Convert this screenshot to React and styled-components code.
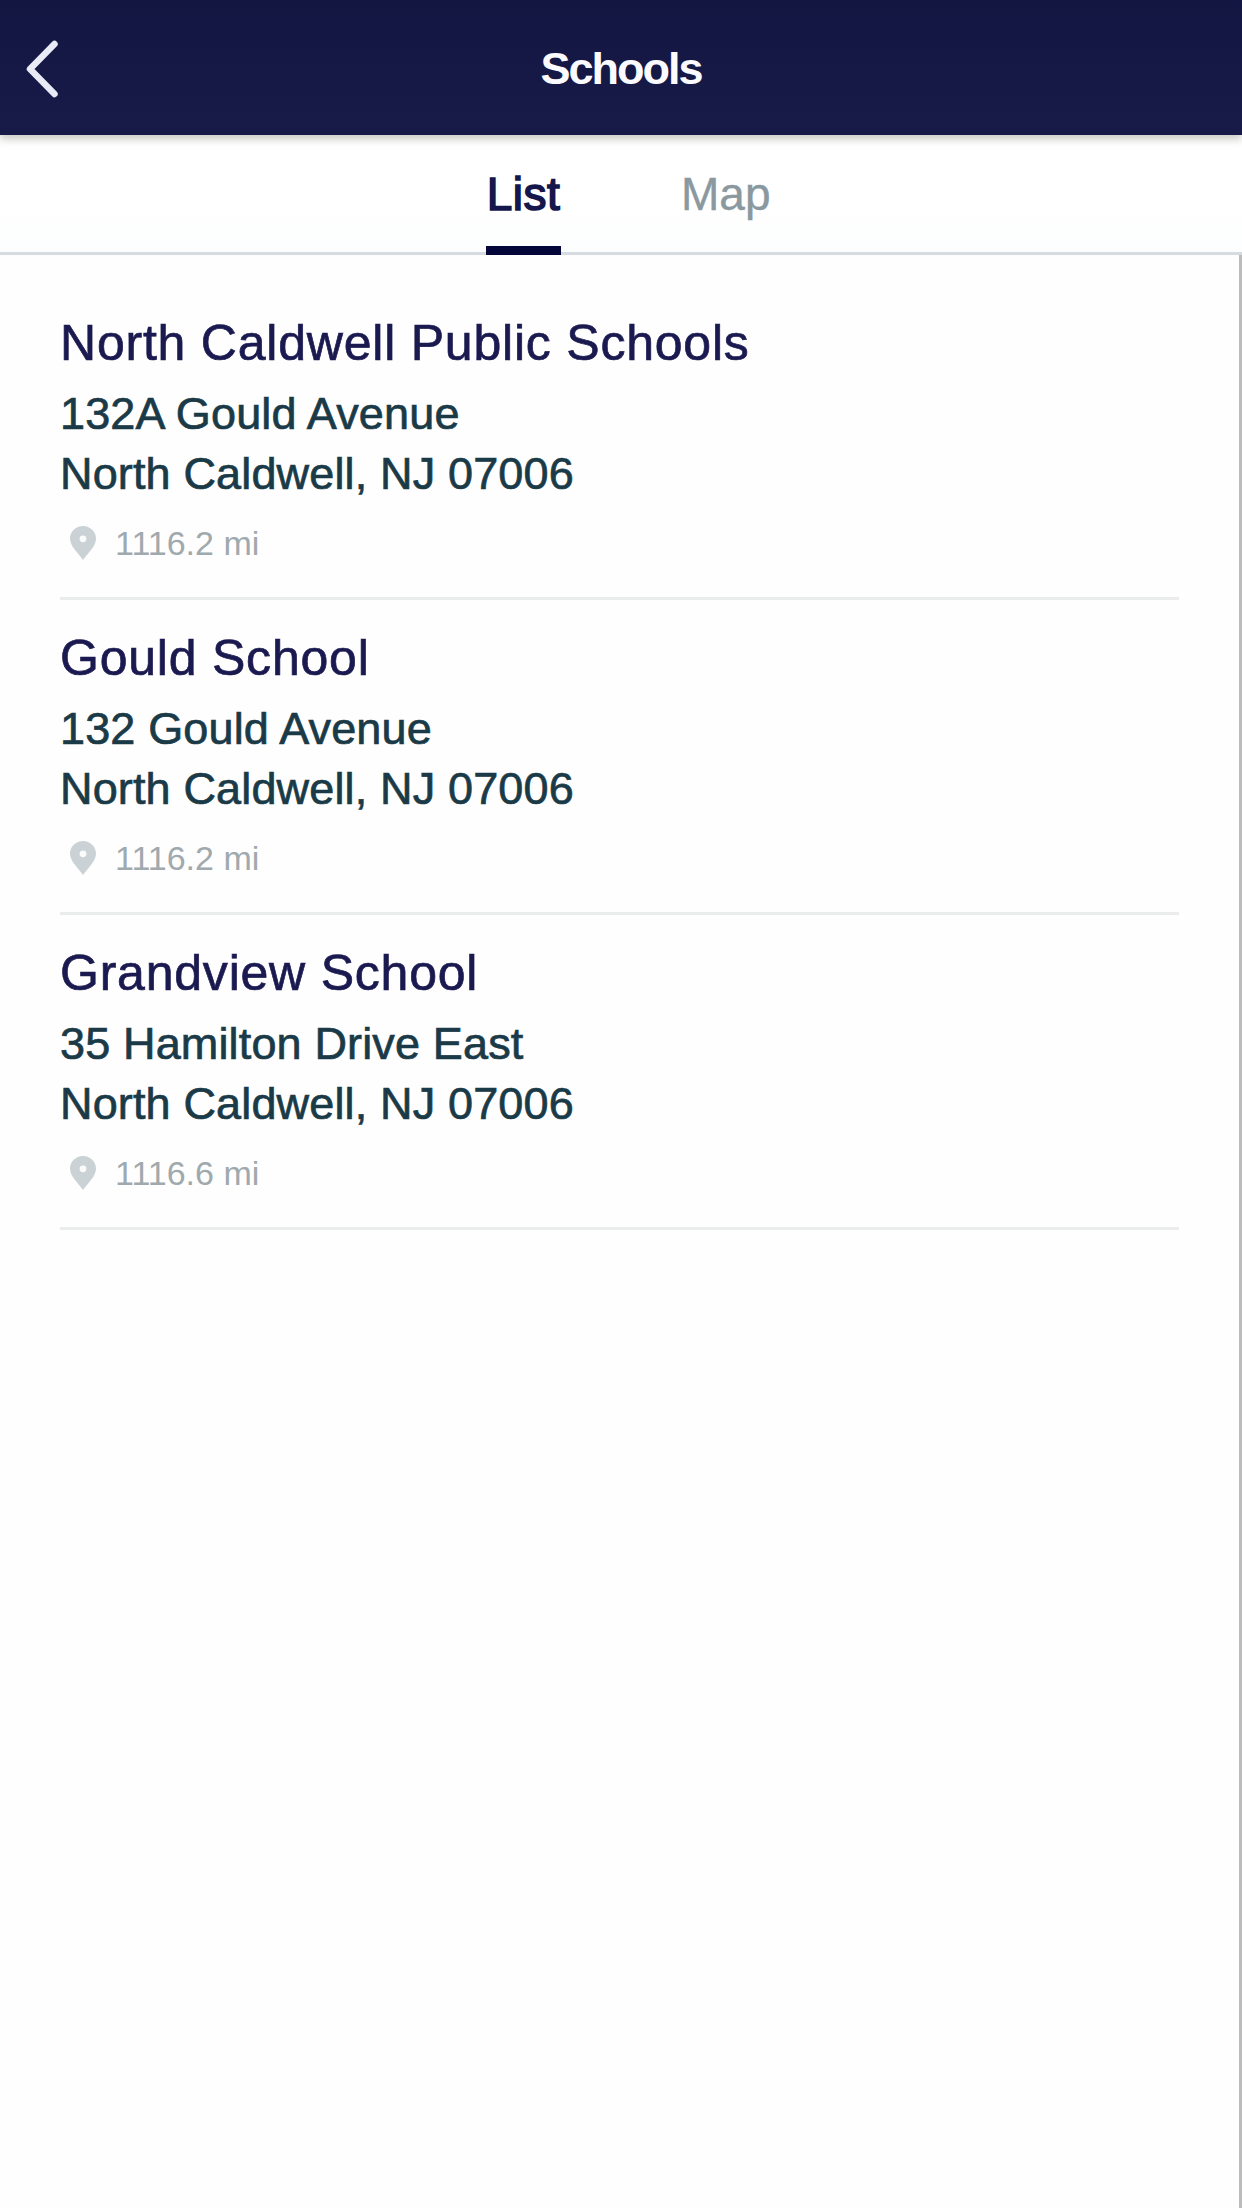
import React from "react";
import styled, { createGlobalStyle, css } from "styled-components";

const schools = [
  {
    name: "North Caldwell Public Schools",
    street: "132A Gould Avenue",
    city: "North Caldwell, NJ 07006",
    distance: "1116.2 mi",
  },
  {
    name: "Gould School",
    street: "132 Gould Avenue",
    city: "North Caldwell, NJ 07006",
    distance: "1116.2 mi",
  },
  {
    name: "Grandview School",
    street: "35 Hamilton Drive East",
    city: "North Caldwell, NJ 07006",
    distance: "1116.6 mi",
  },
];

const GlobalStyle = createGlobalStyle`
  * {
    box-sizing: border-box;
  }

  body {
    margin: 0;
    background: #fefefe;
    font-family: "Liberation Sans", Arial, sans-serif;
  }
`;

const Screen = styled.div`
  display: flex;
  flex-direction: column;
  height: 2208px;
  overflow: hidden;
`;

const Header = styled.header`
  position: relative;
  z-index: 1;
  display: grid;
  grid-template-columns: 100px 1fr 100px;
  align-items: center;
  height: 135px;
  flex-shrink: 0;
  background: linear-gradient(#131641, #181b48);
  box-shadow: 0 4px 8px rgba(40, 40, 20, 0.25);
`;

const BackButton = styled.button`
  display: flex;
  padding: 3px 0 0 22px;
  border: 0;
  background: none;
`;

const Title = styled.h1`
  margin: 0;
  padding-top: 3px;
  color: #fbfbff;
  font-size: 45px;
  font-weight: bold;
  line-height: 52px;
  letter-spacing: -2px;
  text-align: center;
`;

const Tabs = styled.nav`
  display: flex;
  gap: 120px;
  height: 120px;
  flex-shrink: 0;
  padding-left: 486px;
  background: linear-gradient(#fff 60%, #fcfdfe);
  box-shadow: inset 0 -3px #d5dbdf;
`;

const Tab = styled.button`
  height: 120px;
  padding: 7px 0 0;
  border: 0;
  border-bottom: 9px solid transparent;
  background: none;
  color: #8a999f;
  font: 46px/56px "Liberation Sans", Arial, sans-serif;
  -webkit-text-stroke: 0.4px currentColor;

  ${(props) =>
    props.$active &&
    css`
      width: 75px;
      border-color: #040538;
      color: #15164b;
      letter-spacing: 0.5px;
      -webkit-text-stroke: 1.6px #15164b;
    `}
`;

const List = styled.ul`
  flex: 1;
  margin: 0;
  padding: 30px 60px 0;
  border-right: 3px solid #bcbcbc;
  list-style: none;
`;

const School = styled.li`
  height: 315px;
  padding-top: 28px;
  border-bottom: 3px solid #ebecec;
`;

const Name = styled.h2`
  margin: 0;
  color: #1b1a50;
  font-size: 50px;
  font-weight: normal;
  line-height: 60px;
  letter-spacing: 0.78px;
  -webkit-text-stroke: 0.7px #1b1a50;
`;

const Address = styled.p`
  margin: 11px 0 0;
  color: #1b3a47;
  font-size: 45px;
  line-height: 60px;
  letter-spacing: 0.15px;
  -webkit-text-stroke: 0.7px #1b3a47;
`;

const Distance = styled.div`
  display: flex;
  align-items: center;
  gap: 18px;
  margin-top: 16px;
  padding-left: 9px;
  color: #a0a9ad;
  font-size: 34px;
  line-height: 46px;
`;

const BackIcon = () => (
  <svg width="40" height="60" viewBox="0 0 40 60" fill="none">
    <path
      d="M32.500 5 L8 30 L32.500 55"
      stroke="#e8eaf6"
      strokeWidth="6.5"
      strokeLinecap="round"
      strokeLinejoin="round"
    />
  </svg>
);

const PinIcon = () => (
  <svg width="28" height="36" viewBox="0 0 28 36">
    <path
      d="M14 1C6.800 1 1 6.600 1 13.600C1 21 8 27 14 35C20 27 27 21 27 13.600C27 6.600 21.200 1 14 1Z"
      fill="#cbd2d6"
    />
    <circle cx="14" cy="13.800" r="3.400" fill="#fafbfb" />
  </svg>
);

const App = () => (
  <Screen>
    <GlobalStyle />
    <Header>
      <BackButton aria-label="Back">
        <BackIcon />
      </BackButton>
      <Title>Schools</Title>
    </Header>
    <Tabs>
      <Tab $active>List</Tab>
      <Tab>Map</Tab>
    </Tabs>
    <List>
      {schools.map((school) => (
        <School key={school.name}>
          <Name>{school.name}</Name>
          <Address>
            {school.street}
            <br />
            {school.city}
          </Address>
          <Distance>
            <PinIcon />
            {school.distance}
          </Distance>
        </School>
      ))}
    </List>
  </Screen>
);

export default App;
